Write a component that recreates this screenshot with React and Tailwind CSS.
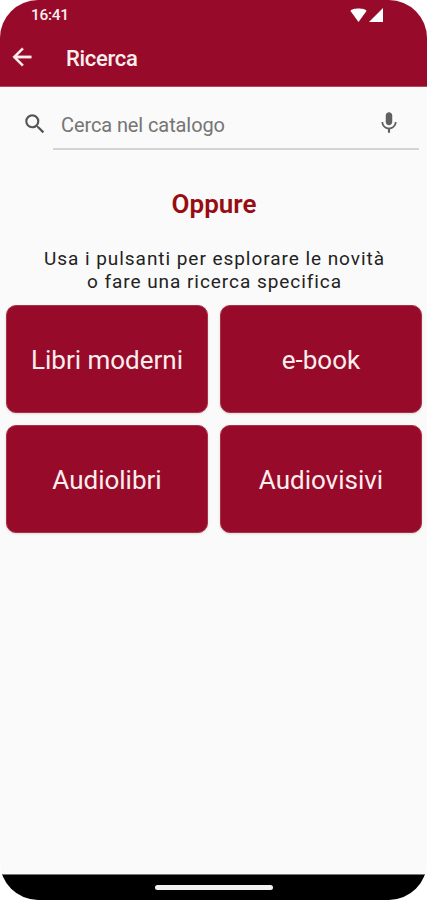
import React from "react";

const categories = ["Libri moderni", "e-book", "Audiolibri", "Audiovisivi"];

function StatusBar() {
  return (
    <div className="flex h-[30px] items-center justify-between pl-[31px] pr-[44px] text-[#fdeeee]">
      <span className="text-[15.5px] leading-[30px] font-medium tracking-[-0.3px]">16:41</span>
      <div className="flex gap-0.5 text-white">
        <svg className="h-[15px] w-[17px]" viewBox="0 0 17 15" fill="currentColor">
          <path d="M0.5 3C2 -0.2 15 -0.2 16.500 3L8.500 14Z" />
        </svg>
        <svg className="h-[15px] w-[14px]" viewBox="0 0 14 15" fill="currentColor">
          <path d="M0 14L14 0V14Z" />
        </svg>
      </div>
    </div>
  );
}

function AppBar() {
  return (
    <div className="flex h-14 items-center pl-[8px]">
      <button type="button" aria-label="Indietro" className="-mt-[3px]">
        <svg className="size-7" viewBox="0 0 24 24" fill="#fdeeee" stroke="#fdeeee" strokeWidth="0.3">
          <path d="M20 11H7.830l5.590-5.590L12 4l-8 8 8 8 1.410-1.410L7.830 13H20z" />
        </svg>
      </button>
      <h1 className="mt-px ml-[30px] text-[22px] font-medium tracking-[-0.3px] text-[#fdeeee]">Ricerca</h1>
    </div>
  );
}

function SearchField() {
  return (
    <div className="flex h-[65px] items-start pr-2 pl-[22px]">
      <svg className="mt-[24px] size-[26px] shrink-0" viewBox="0 0 24 24" fill="#555">
        <path d="M15.500 14h-.790l-.280-.270A6.471 6.471 0 0 0 16 9.500 6.500 6.500 0 1 0 9.500 16c1.610 0 3.090-.590 4.230-1.570l.270.280v.790l5 4.990L20.490 19l-4.990-5zm-6 0C7.010 14 5 11.990 5 9.500S7.010 5 9.500 5 14 7.010 14 9.500 11.990 14 9.500 14z" />
      </svg>
      <div className="ml-[5px] flex h-[63px] flex-1 items-center border-b-2 border-[#d3d3d3] pt-[14px] pr-[17px] pl-2">
        <input
          type="text"
          placeholder="Cerca nel catalogo"
          className="min-w-0 flex-1 bg-transparent text-[20px] tracking-[-0.1px] outline-none placeholder:text-[#757575]"
        />
        <svg className="-mt-[3px] size-[26px] shrink-0" viewBox="0 0 24 24" fill="#606060">
          <path d="M12 14c1.660 0 2.990-1.340 2.990-3L15 5c0-1.660-1.340-3-3-3S9 3.340 9 5v6c0 1.660 1.340 3 3 3zm5.300-3c0 3-2.540 5.100-5.300 5.100S6.700 14 6.700 11H5c0 3.410 2.720 6.230 6 6.720V21h2v-3.280c3.280-.480 6-3.300 6-6.720h-1.700z" />
        </svg>
      </div>
    </div>
  );
}

export default function App() {
  return (
    <div className="h-[900px] w-[427px] bg-white font-[Roboto,sans-serif]">
      <div className="flex h-full flex-col overflow-hidden rounded-[38px] bg-[#fafafa]">
        <header className="h-[87px] shrink-0 border-b border-[#b34a5b] bg-[#970a2a]">
          <StatusBar />
          <AppBar />
        </header>

        <main className="flex-1">
          <SearchField />
          <h2 className="mt-[36px] pl-px text-center text-[26px] leading-8 font-semibold text-[#960d12]">Oppure</h2>
          <p className="mt-[27px] pl-[2px] text-center text-[19px] leading-[23px] tracking-[0.95px] text-[#222]">
            Usa i pulsanti per esplorare le novità
            <br />o fare una ricerca specifica
          </p>
          <div className="mt-3 grid grid-cols-2 gap-3 pr-[5px] pl-[6px]">
            {categories.map((name) => (
              <button
                key={name}
                type="button"
                className="h-[108px] rounded-[10px] border border-[#a93345] bg-[#970a2a] pt-[2px] text-[26px] text-[#fdeeee] shadow-sm"
              >
                {name}
              </button>
            ))}
          </div>
        </main>

        <footer className="flex h-[26px] shrink-0 justify-center border-t border-[#777] bg-black pt-[10px]">
          <div className="h-[5px] w-[118px] rounded-sm bg-[#f2f2f2]" />
        </footer>
      </div>
    </div>
  );
}
